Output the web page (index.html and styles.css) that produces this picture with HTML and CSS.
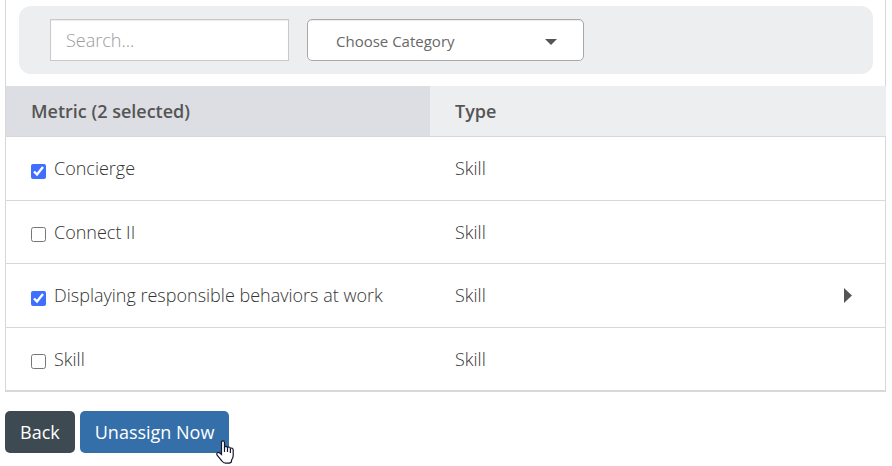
FILE: index.html
```html
<!DOCTYPE html>
<html lang="en">

<head>
  <meta charset="UTF-8">
  <meta name="viewport" content="width=device-width, initial-scale=1.0">
  <title>Unassign Metrics</title>
  <link rel="stylesheet" href="styles.css">
</head>
<body>

<div class="panel">
  <div class="filters">
    <input class="search" type="text" placeholder="Search..." aria-label="Search">
    <div class="category">
      <select aria-label="Category">
        <option>Choose Category</option>
      </select>
      <svg class="caret" width="12" height="6" viewBox="0 0 12 6"><path d="M0 0h12L6 6z"/></svg>
    </div>
  </div>

  <table class="metrics">
    <thead>
      <tr>
        <th class="sorted">Metric (2 selected)</th>
        <th>Type</th>
        <th class="more"></th>
      </tr>
    </thead>
    <tbody>
      <tr>
        <td><label><input type="checkbox" checked>Concierge</label></td>
        <td>Skill</td>
        <td></td>
      </tr>
      <tr>
        <td><label><input type="checkbox">Connect II</label></td>
        <td>Skill</td>
        <td></td>
      </tr>
      <tr>
        <td><label><input type="checkbox" checked>Displaying responsible behaviors at work</label></td>
        <td>Skill</td>
        <td class="more">
          <button class="expand" type="button" aria-label="Expand">
            <svg width="8" height="15" viewBox="0 0 8 15"><path d="M0 0v15l8-7.500z"/></svg>
          </button>
        </td>
      </tr>
      <tr>
        <td><label><input type="checkbox">Skill</label></td>
        <td>Skill</td>
        <td></td>
      </tr>
    </tbody>
  </table>
</div>

<div class="actions">
  <button class="btn" type="button">Back</button>
  <button class="btn primary" type="button">Unassign Now
    <svg class="pointer" width="18" height="24" viewBox="0 0 18 24">
      <path d="M5.500 14.500V2.500Q5.500 .8 7 .8T8.500 2.500V7.500Q8.700 6.300 10 6.300T11.500 8Q11.800 7 13 7T14.400 8.800Q14.600 8 15.700 8T17.200 9.800V15.500Q17.200 18 15.500 20.200V21.500Q15 23.200 12 23.200H9.500Q7.500 23.200 6 21L1.300 15.500Q.2 13.800 1.300 12.900T3.800 13z"/>
      <path d="M8.500 7v5M11.500 8v4M14.400 9v4"/>
    </svg>
  </button>
</div>

</body>
</html>
```
FILE: styles.css
```css
* {
  box-sizing: border-box;
}

body {
  margin: 0;
  padding: 0 6px 13px 5px;
  font-family: 'Open Sans', Arial, sans-serif;
  font-size: 18px;
  font-weight: 300;
  line-height: 24px;
  color: #333;
  background-color: #fff;
}

/* panel */
.panel {
  padding-top: 6px;
  border: 1px solid #d8d8d8;
  border-top: none;
}

.filters {
  display: flex;
  gap: 18px;
  margin: 0 12px 12px 13px;
  padding: 13px 31px;
  background-color: #edeef0;
  border-radius: 12px;
}

.search,
.category select {
  height: 42px;
  font-family: inherit;
  background-color: #fff;
  box-shadow: inset 0 1px 1px rgba(0,0,0,0.08);
}

.search {
  width: 239px;
  padding: 0 15px;
  font-size: 18px;
  font-weight: 300;
  color: #333;
  border: 1px solid #c8c9cb;
}

.search::placeholder {
  color: #9c9c9c;
}

.category {
  position: relative;
  width: 277px;
}

.category select {
  appearance: none;
  width: 100%;
  padding: 2px 28px 0;
  font-size: 15px;
  font-weight: 400;
  color: #686868;
  border: 1px solid #a8a8a8;
  border-radius: 5px;
}

.caret {
  position: absolute;
  right: 27px;
  top: 20px;
  fill: #555;
  pointer-events: none;
}

/* table */
.metrics {
  width: calc(100% + 1px);
  border-collapse: separate;
  border-spacing: 0;
  table-layout: fixed;
}

.metrics th,
.metrics td {
  padding: 0 25px;
  text-align: left;
  border-bottom: 1px solid #d8d8d8;
}

.metrics th {
  height: 51px;
  font-weight: 600;
  color: #555;
  background-color: #edeef0;
}

.metrics th.sorted {
  width: 424px;
  background-color: #dddee3;
}

.metrics th.more {
  width: 67px;
}

.metrics td {
  height: 64px;
  padding-bottom: 1px;
}

.metrics tr:nth-child(even) td {
  height: 63px;
}

.metrics label {
  display: flex;
  align-items: center;
  gap: 8px;
}

.metrics input {
  width: 15px;
  height: 15px;
  margin: 6px 0 0;
  accent-color: #3f6fff;
}

.expand {
  display: flex;
  padding: 0;
  border: none;
  background: none;
  fill: #555;
  cursor: pointer;
}

/* buttons */
.actions {
  display: flex;
  gap: 5px;
  padding-top: 19px;
}

.btn {
  position: relative;
  height: 42px;
  padding: 0 15px;
  font-family: inherit;
  font-size: 18px;
  font-weight: 400;
  color: #fff;
  background-color: #3d4a51;
  border: none;
  border-radius: 5px;
  cursor: pointer;
}

.btn.primary {
  background-color: #346fa9;
}

.pointer {
  position: absolute;
  right: -5px;
  bottom: -11px;
  fill: #fff;
  stroke: #16162a;
  stroke-width: 1.2;
}
```
